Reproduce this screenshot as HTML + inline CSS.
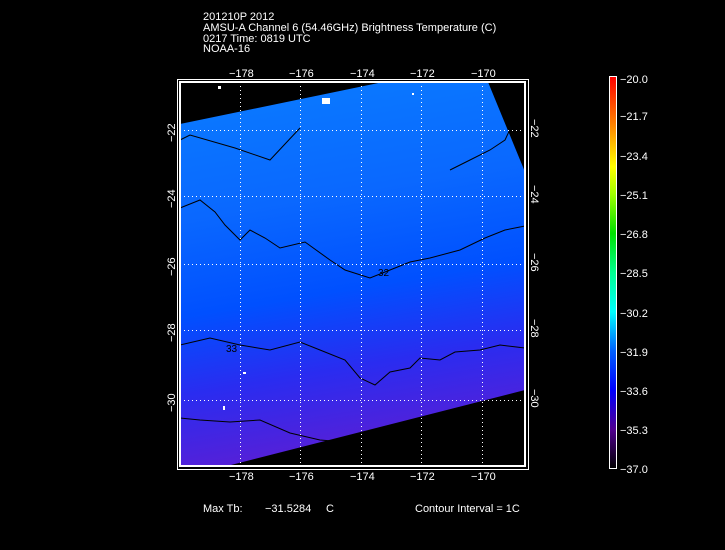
<!DOCTYPE html>
<html><head><style>
body{margin:0;background:#000;width:725px;height:550px;overflow:hidden;position:relative;font-family:"Liberation Sans",sans-serif;color:#fff}
.t{position:absolute;font-size:11px;line-height:11px;white-space:pre}
</style></head><body>
<div class="t" style="left:203px;top:12px">201210P 2012</div>
<div class="t" style="left:203px;top:23px">AMSU-A Channel 6 (54.46GHz) Brightness Temperature (C)</div>
<div class="t" style="left:203px;top:34px">0217 Time: 0819 UTC</div>
<div class="t" style="left:203px;top:44px">NOAA-16</div>
<svg width="725" height="550" style="position:absolute;left:0;top:0">
<defs>
<linearGradient id="g" x1="0" y1="0" x2="0.15" y2="1">
<stop offset="0" stop-color="#0a7cff"/>
<stop offset="0.35" stop-color="#0a68ff"/>
<stop offset="0.6" stop-color="#0050ff"/>
<stop offset="0.8" stop-color="#2a2cf0"/>
<stop offset="1" stop-color="#5520d8"/>
</linearGradient>
<linearGradient id="cb" x1="0" y1="1" x2="0" y2="0">
<stop offset="0" stop-color="#000"/>
<stop offset="0.1" stop-color="#500090"/>
<stop offset="0.2" stop-color="#0000ff"/>
<stop offset="0.3" stop-color="#0060ff"/>
<stop offset="0.4" stop-color="#00ffff"/>
<stop offset="0.5" stop-color="#00ff90"/>
<stop offset="0.6" stop-color="#00e000"/>
<stop offset="0.7" stop-color="#a0ff00"/>
<stop offset="0.77" stop-color="#ffff00"/>
<stop offset="0.88" stop-color="#ff8000"/>
<stop offset="1" stop-color="#ff0000"/>
</linearGradient>
</defs>
<polygon points="180,124 383,82 488,82 525,172 525,390 227,466 180,466" fill="url(#g)"/>
<g fill="none" stroke="#000" stroke-width="1">
<polyline points="180,140 190,135 235,148 270,160 300,128"/>
<polyline points="180,208 200,200 215,212 225,225 240,240 250,230 265,238 280,248 305,242 330,260 345,270 370,278 390,270 410,262 430,258 460,250 485,238 505,230 525,226"/>
<polyline points="450,170 470,160 490,150 505,140 512,125 505,110 495,90"/>
<polyline points="180,345 210,338 240,345 270,350 300,342 320,350 345,360 360,378 375,385 390,372 410,368 420,358 440,360 455,352 480,350 500,345 525,348"/>
<polyline points="180,418 200,420 230,422 260,420 290,433 320,440 345,442"/>
</g>
<g stroke="#fff" stroke-width="1" stroke-dasharray="1,3">
<line x1="240.5" y1="82" x2="240.5" y2="466"/><line x1="300.5" y1="82" x2="300.5" y2="466"/>
<line x1="361.5" y1="82" x2="361.5" y2="466"/><line x1="421.5" y1="82" x2="421.5" y2="466"/>
<line x1="482.5" y1="82" x2="482.5" y2="466"/>
<line x1="180" y1="130.5" x2="525" y2="130.5"/><line x1="180" y1="196.5" x2="525" y2="196.5"/>
<line x1="180" y1="264.5" x2="525" y2="264.5"/><line x1="180" y1="330.5" x2="525" y2="330.5"/>
<line x1="180" y1="400.5" x2="525" y2="400.5"/>
</g>
<g fill="#fff"><rect x="322" y="98" width="8" height="6"/><rect x="218" y="86" width="3" height="3"/><rect x="412" y="93" width="2" height="2"/><rect x="223" y="406" width="2" height="4"/><rect x="243" y="372" width="3" height="2"/></g>
<rect x="177.5" y="79.5" width="351" height="390" fill="none" stroke="#fff" stroke-width="1"/>
<rect x="180" y="82" width="345" height="384" fill="none" stroke="#fff" stroke-width="2"/>
<rect x="609.5" y="76.5" width="7" height="392" fill="url(#cb)" stroke="#fff"/>
<g fill="#fff" font-family="Liberation Sans,sans-serif" font-size="11">
<text x="229" y="77">−178</text><text x="289" y="77">−176</text><text x="350" y="77">−174</text><text x="410" y="77">−172</text><text x="471" y="77">−170</text>
<text x="229" y="480">−178</text><text x="289" y="480">−176</text><text x="350" y="480">−174</text><text x="410" y="480">−172</text><text x="471" y="480">−170</text>
<g transform="rotate(-90)"><text x="-142" y="175">−22</text><text x="-208" y="175">−24</text><text x="-276" y="175">−26</text><text x="-342" y="175">−28</text><text x="-412" y="175">−30</text></g>
<g transform="rotate(90)"><text x="119" y="-531">−22</text><text x="185" y="-531">−24</text><text x="253" y="-531">−26</text><text x="319" y="-531">−28</text><text x="389" y="-531">−30</text></g>
<text x="620" y="83">−20.0</text><text x="620" y="120">−21.7</text><text x="620" y="160">−23.4</text><text x="620" y="199">−25.1</text><text x="620" y="238">−26.8</text><text x="620" y="277">−28.5</text><text x="620" y="317">−30.2</text><text x="620" y="356">−31.9</text><text x="620" y="395">−33.6</text><text x="620" y="434">−35.3</text><text x="620" y="473">−37.0</text>
<text x="203" y="512">Max Tb:</text><text x="265" y="512">−31.5284</text><text x="326" y="512">C</text><text x="415" y="512">Contour Interval = 1C</text>
</g>
<g fill="#000" font-family="Liberation Sans,sans-serif" font-size="10"><text x="378" y="276">32</text><text x="226" y="352">33</text></g>
</svg>
</body></html>
